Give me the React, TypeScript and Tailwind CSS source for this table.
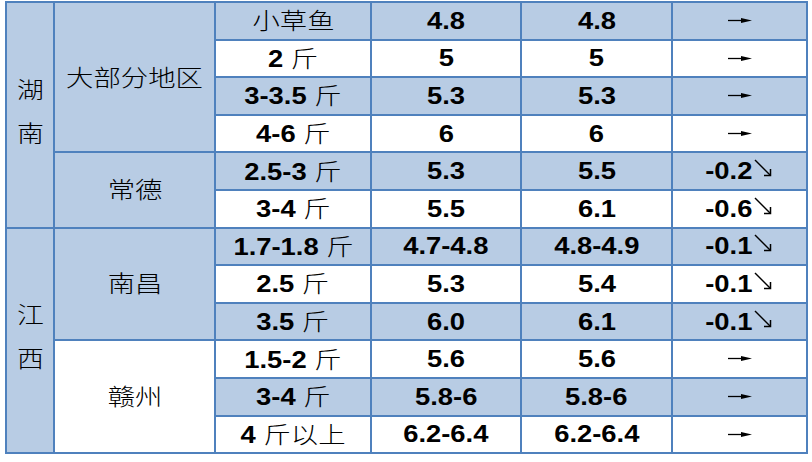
import React from 'react';

type Spec = { n: string; c: string };
type Row = { spec: Spec; prev: string; cur: string; change: string | null };

const rows: Row[] = [
  { spec: { n: '', c: '小草鱼' }, prev: '4.8', cur: '4.8', change: null },
  { spec: { n: '2 ', c: '斤' }, prev: '5', cur: '5', change: null },
  { spec: { n: '3-3.5 ', c: '斤' }, prev: '5.3', cur: '5.3', change: null },
  { spec: { n: '4-6 ', c: '斤' }, prev: '6', cur: '6', change: null },
  { spec: { n: '2.5-3 ', c: '斤' }, prev: '5.3', cur: '5.5', change: '-0.2' },
  { spec: { n: '3-4 ', c: '斤' }, prev: '5.5', cur: '6.1', change: '-0.6' },
  { spec: { n: '1.7-1.8 ', c: '斤' }, prev: '4.7-4.8', cur: '4.8-4.9', change: '-0.1' },
  { spec: { n: '2.5 ', c: '斤' }, prev: '5.3', cur: '5.4', change: '-0.1' },
  { spec: { n: '3.5 ', c: '斤' }, prev: '6.0', cur: '6.1', change: '-0.1' },
  { spec: { n: '1.5-2 ', c: '斤' }, prev: '5.6', cur: '5.6', change: null },
  { spec: { n: '3-4 ', c: '斤' }, prev: '5.8-6', cur: '5.8-6', change: null },
  { spec: { n: '4 ', c: '斤以上' }, prev: '6.2-6.4', cur: '6.2-6.4', change: null },
];

// merged cells keyed by the row they start on: [span, label, blue?]
const provinces: Record<number, [number, string]> = { 0: [6, '湖南'], 6: [6, '江西'] };
const cities: Record<number, [number, string, boolean]> = {
  0: [4, '大部分地区', true],
  4: [2, '常德', true],
  6: [3, '南昌', true],
  9: [3, '赣州', false],
};

const cn = "font-['Noto_Sans_CJK_SC',sans-serif] font-light";
const num = "font-['Liberation_Sans',Arial,sans-serif] font-bold";

const Cell = ({ blue, rowSpan, children }: { blue: boolean; rowSpan?: number; children: React.ReactNode }) => (
  <td
    rowSpan={rowSpan}
    className={`border-2 border-[#4f81bd] p-0 text-center align-middle ${blue ? 'bg-[#b8cce4]' : 'bg-white'}`}
  >
    {children}
  </td>
);

const Wide = ({ children }: { children: React.ReactNode }) => (
  <span className="inline-block translate-y-[1px] scale-x-119 whitespace-pre text-[23px] leading-none text-black">
    {children}
  </span>
);

const ArrowFlat = () => (
  <svg width="24" height="7" viewBox="0 0 24 7" className="-mt-1 inline-block">
    <line x1="0" y1="3.5" x2="16" y2="3.5" stroke="#000" strokeWidth="1.3" />
    <polygon points="13,1 24,3.5 13,6" fill="#000" />
  </svg>
);

const ArrowDown = () => (
  <svg width="18" height="18" viewBox="0 0 18 18" className="-mt-1 ml-[5px] inline-block align-middle">
    <line x1="1" y1="1" x2="16.5" y2="16.5" stroke="#000" strokeWidth="1.5" />
    <polyline points="10,16.5 16.5,16.5 16.5,10" fill="none" stroke="#000" strokeWidth="1.5" />
  </svg>
);

export default function App() {
  return (
    <div className="h-[462px] w-[812px] overflow-hidden bg-white pl-[5px] pt-[1px]">
      <table className="w-[801px] table-fixed border-collapse">
        <colgroup>
          <col className="w-[48px]" />
          <col className="w-[161px]" />
          <col className="w-[156px]" />
          <col className="w-[150px]" />
          <col className="w-[151px]" />
          <col className="w-[135px]" />
        </colgroup>
        <tbody>
          {rows.map((r, i) => {
            const blue = i % 2 === 0;
            const prov = provinces[i];
            const city = cities[i];
            return (
              <tr key={i} className="h-[37.6px]">
                {prov && (
                  <Cell blue rowSpan={prov[0]}>
                    <span className={`inline-block -translate-y-[5px] scale-x-117 text-[23px] leading-[44px] text-black ${cn}`}>
                      {prov[1][0]}
                      <br />
                      {prov[1][1]}
                    </span>
                  </Cell>
                )}
                {city && (
                  <Cell blue={city[2]} rowSpan={city[0]}>
                    <Wide>
                      <span className={cn}>{city[1]}</span>
                    </Wide>
                  </Cell>
                )}
                <Cell blue={blue}>
                  <Wide>
                    {r.spec.n && <span className={num}>{r.spec.n}</span>}
                    <span className={cn}>{r.spec.c}</span>
                  </Wide>
                </Cell>
                <Cell blue={blue}>
                  <Wide>
                    <span className={num}>{r.prev}</span>
                  </Wide>
                </Cell>
                <Cell blue={blue}>
                  <Wide>
                    <span className={num}>{r.cur}</span>
                  </Wide>
                </Cell>
                <Cell blue={blue}>
                  {r.change ? (
                    <span className="inline-flex items-center pl-[2px]">
                      <Wide>
                        <span className={num}>{r.change}</span>
                      </Wide>
                      <ArrowDown />
                    </span>
                  ) : (
                    <ArrowFlat />
                  )}
                </Cell>
              </tr>
            );
          })}
        </tbody>
      </table>
    </div>
  );
}
